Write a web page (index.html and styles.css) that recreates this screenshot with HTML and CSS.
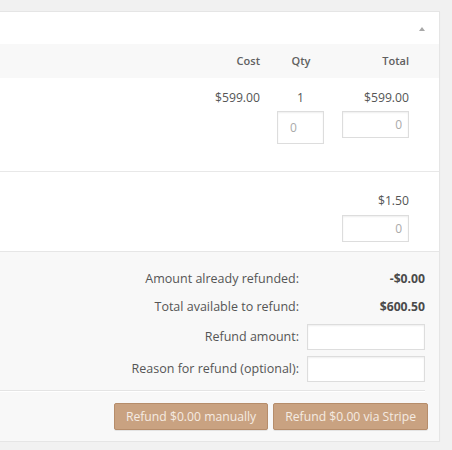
FILE: index.html
```html
<!DOCTYPE html>
<html lang="en">
<head>
<meta charset="utf-8">
<title>Order items – refund</title>
<link rel="stylesheet" href="styles.css">
</head>
<body>
<div class="panel">
  <div class="panel-head"><span class="toggle" aria-label="Collapse"></span></div>

  <div class="cols thead">
    <span></span>
    <span class="c-cost">Cost</span>
    <span class="c-qty">Qty</span>
    <span class="c-total">Total</span>
  </div>

  <div class="cols item">
    <span></span>
    <div class="c-cost">$599.00</div>
    <div class="c-qty stack">
      <span>1</span>
      <input class="field qty-field" type="text" placeholder="0">
    </div>
    <div class="c-total stack">
      <span>$599.00</span>
      <input class="field total-field" type="text" placeholder="0">
    </div>
  </div>

  <div class="cols shipping">
    <span></span>
    <span></span>
    <span></span>
    <div class="c-total stack">
      <span>$1.50</span>
      <input class="field total-field" type="text" placeholder="0">
    </div>
  </div>

  <div class="refund">
    <div class="refund-table">
      <div class="r-label">Amount already refunded:</div>
      <div class="r-val">-$0.00</div>
      <div class="r-label">Total available to refund:</div>
      <div class="r-val">$600.50</div>
      <div class="r-label">Refund amount:</div>
      <div class="r-input"><input class="field wide-field" type="text"></div>
      <div class="r-label">Reason for refund (optional):</div>
      <div class="r-input"><input class="field wide-field" type="text"></div>
    </div>
    <div class="actions">
      <button class="btn" type="button">Refund $0.00 manually</button>
      <button class="btn" type="button">Refund $0.00 via Stripe</button>
    </div>
  </div>
</div>
</body>
</html>
```

FILE: styles.css
```css
html, body {
  margin: 0;
  padding: 0;
  background: #f1f1f1;
}

body {
  font-family: "Open Sans", "Liberation Sans", sans-serif;
  font-size: 12.2px;
  line-height: 20px;
  color: #555;
  padding-top: 11px;
}

.panel {
  box-sizing: border-box;
  width: 440px;
  background: #fff;
  border: 1px solid #e5e5e5;
  border-left: 0;
  box-shadow: 0 1px 1px rgba(0, 0, 0, 0.04);
}

.panel-head {
  height: 32px;
  display: flex;
  align-items: center;
  justify-content: flex-end;
  padding-right: 14px;
}

.toggle {
  width: 0;
  height: 0;
  border-left: 3.5px solid transparent;
  border-right: 3.5px solid transparent;
  border-bottom: 4px solid #a8a8a8;
  margin-top: 1px;
}

.cols {
  display: grid;
  grid-template-columns: 1fr 60px 48px 67px;
  column-gap: 17px;
  padding-right: 30px;
}

.thead {
  height: 34px;
  align-items: center;
  background: #f8f8f8;
  font-size: 11px;
  font-weight: 600;
  color: #606060;
}

.c-cost { text-align: right; }
.c-qty { text-align: center; }
.c-total { text-align: right; }

.item {
  height: 94px;
  padding-top: 10px;
  box-sizing: border-box;
  border-bottom: 1px solid #e8e8e8;
  align-items: start;
}

.shipping {
  height: 79px;
  padding-top: 19px;
  box-sizing: border-box;
  align-items: start;
}

.stack {
  display: flex;
  flex-direction: column;
}

.c-qty.stack { align-items: flex-start; }
.c-total.stack { align-items: stretch; }

.c-qty.stack > span {
  align-self: stretch;
  text-align: center;
  padding-right: 1px;
}

.field {
  box-sizing: border-box;
  font-family: inherit;
  font-size: 12px;
  color: #555;
  background: #fff;
  border: 1px solid #ddd;
  border-radius: 0;
  box-shadow: inset 0 1px 2px rgba(0, 0, 0, 0.07);
  margin: 0;
  outline: none;
}

.field::placeholder { color: #aaa; }

.qty-field {
  width: 47px;
  height: 33px;
  margin-top: 3px;
  padding: 0 0 0 12px;
  text-align: left;
}

.total-field {
  width: 67px;
  height: 27px;
  margin-top: 3px;
  padding: 0 6px 0 0;
  text-align: right;
}

.shipping .total-field { margin-top: 4px; }

.refund {
  background: #f8f8f8;
  border-top: 1px solid #e6e6e6;
}

.refund-table {
  display: grid;
  grid-template-columns: 1fr 118px;
  grid-template-rows: 28px 28px 32px 32px;
  column-gap: 8px;
  align-items: center;
  margin-right: 14px;
  padding: 13px 0 5px;
  border-bottom: 1px solid #e4e4e4;
  box-shadow: 0 1px 0 #fff;
}

.r-label {
  text-align: right;
  font-size: 12.5px;
}

.r-val {
  text-align: right;
  font-weight: 700;
  color: #4a4a4a;
}

.r-input { display: flex; }

.wide-field {
  width: 118px;
  height: 26px;
}

.actions {
  display: flex;
  justify-content: flex-end;
  gap: 5px;
  padding: 12px 11px 11px;
}

.btn {
  height: 27px;
  padding: 0 11px;
  font-family: inherit;
  font-size: 12.2px;
  color: #f5ebe2;
  background: #c9a281;
  border: 1px solid #b68d6b;
  border-radius: 2px;
  box-shadow: 0 1px 0 rgba(0, 0, 0, 0.08);
  cursor: default;
}
```
